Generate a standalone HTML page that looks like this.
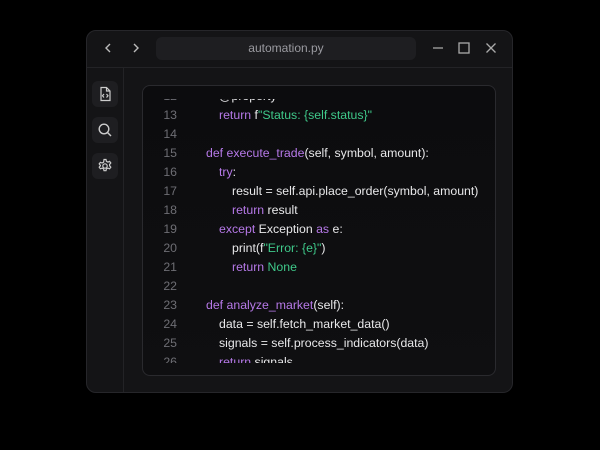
<!DOCTYPE html><html><head><style>
body{margin:0;width:600px;height:450px;background:#000;font-family:"Liberation Sans",sans-serif;overflow:hidden;position:relative}
.win{position:absolute;left:86px;top:30px;width:427px;height:363px;background:#141416;border:1px solid #26262a;border-radius:10px;box-sizing:border-box;overflow:hidden}
.tb{position:absolute;left:0;top:0;right:0;height:36px;border-bottom:1px solid #232326}
.addr{position:absolute;left:69px;top:6px;width:260px;height:23px;background:#1e1e21;border-radius:6px;color:#9a9aa0;font-size:12px;text-align:center;line-height:23px}
.side{position:absolute;left:0;top:36px;width:36px;bottom:0;border-right:1px solid #232326}
.btn{position:absolute;left:5px;width:26px;height:26px;background:#1e1e21;border-radius:6px}
.btn svg{position:absolute;left:5px;top:5px}
.panel{position:absolute;left:55px;top:54px;width:354px;height:291px;border:1px solid #2a2a2e;border-radius:8px;background:linear-gradient(#0c0c0e,#0f0f11);box-sizing:border-box;overflow:hidden}
.code{position:absolute;left:0;right:0;top:13px;bottom:12px;overflow:hidden}
.ln{position:absolute;height:19px;font-size:12.3px;line-height:19px;color:#e8e8ea;white-space:pre}
.n{position:absolute;width:34px;text-align:right;color:#6e6e74;left:0}
.k{color:#b679e8}.s{color:#3fc98a}
</style></head><body>
<div class="win">
<div class="tb">
<svg style="position:absolute;left:17px;top:11px" width="10" height="12"><path d="M6 2L2 6L6 10" stroke="#bbb" stroke-width="1.4" fill="none"/></svg>
<svg style="position:absolute;left:44px;top:11px" width="10" height="12"><path d="M3 2L7 6L3 10" stroke="#bbb" stroke-width="1.4" fill="none"/></svg>
<div class="addr">automation.py</div>
<svg style="position:absolute;left:345px;top:11px" width="12" height="12"><path d="M1 6H11" stroke="#aaa" stroke-width="1.3"/></svg>
<svg style="position:absolute;left:371px;top:11px" width="12" height="12"><rect x="1" y="1" width="10" height="10" stroke="#aaa" stroke-width="1.3" fill="none"/></svg>
<svg style="position:absolute;left:398px;top:11px" width="12" height="12"><path d="M1.5 1.5L10.5 10.5M10.5 1.5L1.5 10.5" stroke="#aaa" stroke-width="1.3"/></svg>
</div>
<div class="side">
<div class="btn" style="top:14px"><svg width="16" height="16" fill="none" stroke="#ccc" stroke-width="1.2"><path d="M4 1.5H9.5L13 5V14.5H4z M9.5 1.5V5H13"/><path d="M7 8L5.5 9.8L7 11.5M9.5 8L11 9.8L9.5 11.5"/></svg></div>
<div class="btn" style="top:50px"><svg width="16" height="16" fill="none" stroke="#ccc" stroke-width="1.4"><circle cx="7" cy="7" r="4.8"/><path d="M10.5 10.5L14 14"/></svg></div>
<div class="btn" style="top:86px"><svg width="16" height="16" fill="none" stroke="#ccc" stroke-width="1.2"><circle cx="8" cy="8" r="2.2"/><path d="M7 1.5h2l.4 1.8 1.5.8 1.7-.7 1.2 1.6-1.2 1.4v1.4l1.2 1.4-1.2 1.6-1.7-.7-1.5.8-.4 1.8H7l-.4-1.8-1.5-.8-1.7.7-1.2-1.6 1.2-1.4V7.3L2.2 5.9l1.2-1.6 1.7.7 1.5-.8z"/></svg></div>
</div>
<div class="panel"><div class="code">
<div class="ln" style="top:-12px;left:0;width:100%"><span class="n">12</span><span style="position:absolute;left:76px">@property</span></div>
<div class="ln" style="top:7px;width:100%"><span class="n">13</span><span style="position:absolute;left:76px"><span class="k">return</span> f<span class="s">"Status: {self.status}"</span></span></div>
<div class="ln" style="top:26px;width:100%"><span class="n">14</span></div>
<div class="ln" style="top:45px;width:100%"><span class="n">15</span><span style="position:absolute;left:63px"><span class="k">def execute_trade</span>(self, symbol, amount):</span></div>
<div class="ln" style="top:64px;width:100%"><span class="n">16</span><span style="position:absolute;left:76px"><span class="k">try</span>:</span></div>
<div class="ln" style="top:83px;width:100%"><span class="n">17</span><span style="position:absolute;left:89px">result = self.api.place_order(symbol, amount)</span></div>
<div class="ln" style="top:102px;width:100%"><span class="n">18</span><span style="position:absolute;left:89px"><span class="k">return</span> result</span></div>
<div class="ln" style="top:121px;width:100%"><span class="n">19</span><span style="position:absolute;left:76px"><span class="k">except</span> Exception <span class="k">as</span> e:</span></div>
<div class="ln" style="top:140px;width:100%"><span class="n">20</span><span style="position:absolute;left:89px">print(f<span class="s">"Error: {e}"</span>)</span></div>
<div class="ln" style="top:159px;width:100%"><span class="n">21</span><span style="position:absolute;left:89px"><span class="k">return</span> <span class="s">None</span></span></div>
<div class="ln" style="top:178px;width:100%"><span class="n">22</span></div>
<div class="ln" style="top:197px;width:100%"><span class="n">23</span><span style="position:absolute;left:63px"><span class="k">def analyze_market</span>(self):</span></div>
<div class="ln" style="top:216px;width:100%"><span class="n">24</span><span style="position:absolute;left:76px">data = self.fetch_market_data()</span></div>
<div class="ln" style="top:235px;width:100%"><span class="n">25</span><span style="position:absolute;left:76px">signals = self.process_indicators(data)</span></div>
<div class="ln" style="top:254px;width:100%"><span class="n">26</span><span style="position:absolute;left:76px"><span class="k">return</span> signals</span></div>
</div></div>
</div>
</body></html>
